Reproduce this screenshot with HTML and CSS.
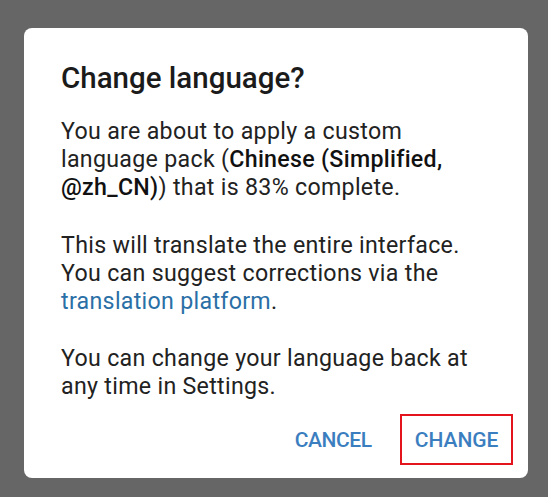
FILE: index.html
```html
<!DOCTYPE html>
<html>
<head>
<meta charset="utf-8">
<link rel="stylesheet" href="styles.css">
</head>
<body>
<div class="dialog">
  <h1 class="title">Change language?</h1>
  <div class="content">
    <p>You are about to apply a custom language pack (<b>Chinese (Simplified, @zh_CN)</b>) that is 83% complete.</p>
    <p>This will translate the entire interface. You can suggest corrections via the <a class="link" href="#">translation platform</a>.</p>
    <p>You can change your language back at any time in Settings.</p>
  </div>
  <div class="actions">
    <button class="btn btn-cancel">CANCEL</button>
    <button class="btn btn-primary">CHANGE</button>
  </div>
</div>
</body>
</html>
```

FILE: styles.css
```css
html, body {
  margin: 0;
  padding: 0;
}
body {
  background: #666666;
  width: 548px;
  height: 497px;
  padding: 28px 0 0 24px;
  box-sizing: border-box;
  font-family: Roboto, "Noto Sans", sans-serif;
}
.dialog {
  width: 504px;
  height: 450px;
  background: #ffffff;
  border-radius: 8px;
  box-sizing: border-box;
  padding: 33px 30px 0 37px;
  display: flex;
  flex-direction: column;
}
.title {
  margin: 0;
  font-size: 29.5px;
  line-height: 34px;
  font-weight: 500;
  color: #1b1b1b;
}
.content {
  margin-top: 22px;
  width: 420px;
  font-size: 23.2px;
  letter-spacing: 0.3px;
  line-height: 28px;
  color: #222222;
}
.content p {
  margin: 0 0 29.5px 0;
}
.content p:last-child {
  margin-bottom: 0;
}
.content b {
  font-weight: 500;
  color: #111111;
}
.link {
  color: #2a6fa6;
  text-decoration: none;
}
.actions {
  display: flex;
  justify-content: flex-end;
  gap: 14px;
  margin-top: auto;
  margin-right: -15px;
  margin-bottom: 13px;
}
.btn {
  background: none;
  border: 2px solid transparent;
  font-family: Roboto, sans-serif;
  font-size: 21px;
  font-weight: 500;
  color: #3b7ec0;
  padding: 0 12.5px;
  height: 51px;
  cursor: pointer;
}
.btn-cancel {
  letter-spacing: -0.4px;
}
.btn-primary {
  border-color: #e3141c;
}
```
